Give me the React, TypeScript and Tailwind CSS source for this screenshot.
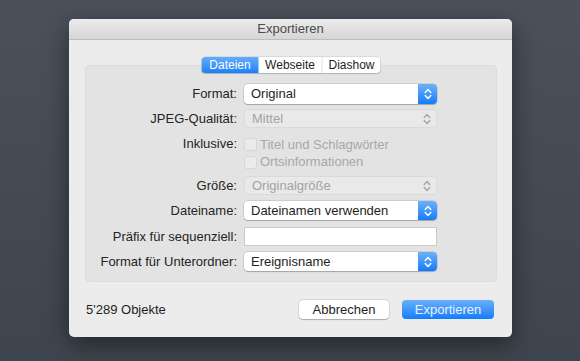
import React from "react";

const font = { fontFamily: '"Liberation Sans", Arial, sans-serif' };

function Chevrons({ color }: { color: string }) {
  return (
    <svg width="8" height="12" viewBox="0 0 8 12" fill="none">
      <path d="M1.2 4.5 L4 1.6 L6.8 4.5" stroke={color} strokeWidth="1.4" strokeLinecap="round" strokeLinejoin="round" />
      <path d="M1.2 7.5 L4 10.4 L6.8 7.5" stroke={color} strokeWidth="1.4" strokeLinecap="round" strokeLinejoin="round" />
    </svg>
  );
}

function Popup({ value, disabled }: { value: string; disabled?: boolean }) {
  if (disabled) {
    return (
      <div className="flex h-full w-[193px] items-center rounded-[4px] border border-[#dadada] bg-[#e9e9e9]">
        <span className="flex-1 pl-[7px] text-[13px] text-[#a3a3a3]">{value}</span>
        <div className="flex w-[19px] items-center justify-center">
          <Chevrons color="#a6a6a6" />
        </div>
      </div>
    );
  }
  return (
    <div className="flex h-full w-[193px] items-center rounded-[4px] bg-white shadow-[0_0_0_0.5px_rgba(0,0,0,0.18),0_1px_1px_rgba(0,0,0,0.2)]">
      <span className="flex-1 pl-[7px] text-[13px] text-[#1e1e1e]">{value}</span>
      <div className="flex h-full w-[19px] items-center justify-center rounded-r-[4px] bg-gradient-to-b from-[#69b1fa] to-[#0f7cfa]">
        <Chevrons color="#ffffff" />
      </div>
    </div>
  );
}

function Row({ label, children, className }: { label: string; children: React.ReactNode; className: string }) {
  return (
    <div className={"flex items-center " + className}>
      <div className="w-[151px] text-right text-[13px] text-[#242424]">{label}</div>
      <div className="ml-[7px] h-full">{children}</div>
    </div>
  );
}

function Check({ label }: { label: string }) {
  return (
    <div className="flex items-center gap-[3px]">
      <div className="h-[13px] w-[13px] rounded-[3px] border border-[#d6d6d6] bg-[#ebebeb]" />
      <span className="text-[13px] text-[#a8a8a8]">{label}</span>
    </div>
  );
}

export default function App() {
  return (
    <div className="h-[361px] w-[580px] overflow-hidden bg-gradient-to-b from-[#4a515b] to-[#3f454e]" style={font}>
      <div className="ml-[69px] pt-[19px]">
        <div className="h-[318px] w-[443px] overflow-hidden rounded-[5px] bg-[#ececec] shadow-[0_8px_24px_rgba(0,0,0,0.45)]">
          <div className="flex h-[21px] items-center justify-center border-b border-[#bdbdbd] bg-gradient-to-b from-[#ececec] to-[#d6d6d6] text-[13px] text-[#4b4b4b]">
            Exportieren
          </div>
          <div className="px-[16px] pt-[25px]">
            <div className="relative h-[217px] w-[412px] rounded-[4px] border border-[#dcdcdc] bg-[#e3e3e3]">
              <div className="absolute left-1/2 top-[-9px] flex h-[16px] -translate-x-1/2 overflow-hidden rounded-[4px] bg-white text-[12px] shadow-[0_0_0_0.5px_rgba(0,0,0,0.15),0_1px_1px_rgba(0,0,0,0.15)]">
                <div className="flex w-[57px] items-center justify-center bg-gradient-to-b from-[#62acf9] to-[#1481fb] text-white">Dateien</div>
                <div className="flex w-[63px] items-center justify-center text-[#1e1e1e]">Webseite</div>
                <div className="flex w-[59px] items-center justify-center border-l border-[#e2e2e2] text-[#1e1e1e]">Diashow</div>
              </div>
              <div className="flex flex-col">
                <Row label="Format:" className="mt-[18px] h-[20px]">
                  <Popup value="Original" />
                </Row>
                <Row label="JPEG-Qualität:" className="mt-[5px] h-[19px]">
                  <Popup value="Mittel" disabled />
                </Row>
                <Row label="Inklusive:" className="mt-[7px] h-[18px]">
                  <Check label="Titel und Schlagwörter" />
                </Row>
                <div className="flex h-[18px] items-center pl-[158px]">
                  <Check label="Ortsinformationen" />
                </div>
                <Row label="Größe:" className="mt-[5px] h-[19px]">
                  <Popup value="Originalgröße" disabled />
                </Row>
                <Row label="Dateiname:" className="mt-[6px] h-[19px]">
                  <Popup value="Dateinamen verwenden" />
                </Row>
                <Row label="Präfix für sequenziell:" className="mt-[7px] h-[19px]">
                  <div className="h-full w-[193px] border border-[#cacaca] bg-white" />
                </Row>
                <Row label="Format für Unterordner:" className="mt-[6px] h-[19px]">
                  <Popup value="Ereignisname" />
                </Row>
              </div>
            </div>
            <div className="flex h-[55px] items-center">
              <span className="flex-1 pl-[1px] text-[13px] text-[#1e1e1e]">5'289 Objekte</span>
              <div className="flex h-[19px] w-[90px] items-center justify-center rounded-[4px] bg-white text-[13px] text-[#1e1e1e] shadow-[0_0_0_0.5px_rgba(0,0,0,0.18),0_1px_1px_rgba(0,0,0,0.2)]">
                Abbrechen
              </div>
              <div className="ml-[13px] mr-[2px] flex h-[19px] w-[92px] items-center justify-center rounded-[4px] bg-gradient-to-b from-[#66aff9] to-[#0f7cfa] text-[13px] text-[#e8f2ff]">
                Exportieren
              </div>
            </div>
          </div>
        </div>
      </div>
    </div>
  );
}
